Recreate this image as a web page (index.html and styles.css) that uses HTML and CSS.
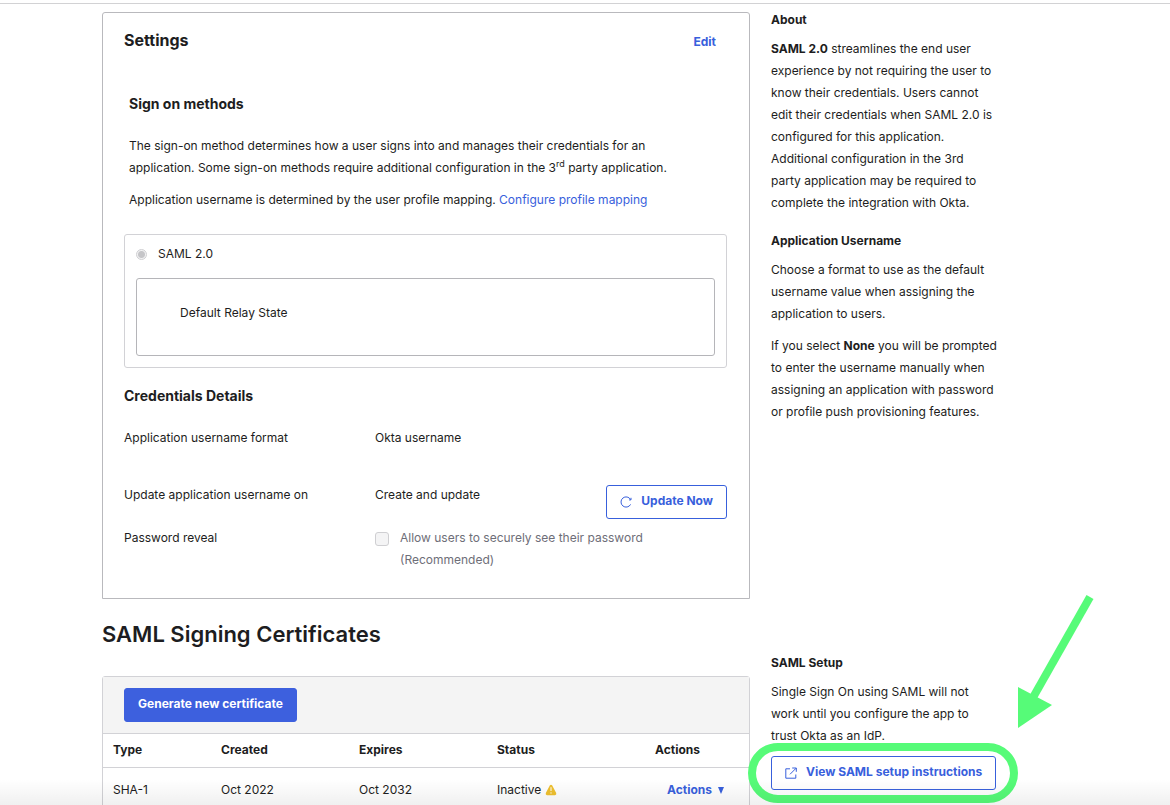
FILE: index.html
```html
<!DOCTYPE html>
<html lang="en">
<head>
<meta charset="utf-8">
<title>Sign on settings</title>
<link rel="stylesheet" href="styles.css">
</head>
<body>
<div class="page">
  <div class="layout">
    <main class="panel">
      <header class="panel-header">
        <h2>Settings</h2>
        <a class="edit" href="#edit">Edit</a>
      </header>
      <section class="methods">
        <h3>Sign on methods</h3>
        <p>The sign-on method determines how a user signs into and manages their credentials for an application. Some sign-on methods require additional configuration in the 3<sup>rd</sup> party application.</p>
        <p>Application username is determined by the user profile mapping. <a href="#mapping">Configure profile mapping</a></p>
      </section>
      <section class="method">
        <label class="method-name"><input class="radio" type="radio" name="method" checked disabled>SAML 2.0</label>
        <div class="relay">Default Relay State</div>
      </section>
      <section class="credentials">
        <h3>Credentials Details</h3>
        <div class="field field-format"><span>Application username format</span><span>Okta username</span></div>
        <div class="field field-update">
          <span>Update application username on</span><span>Create and update</span>
          <button class="button" type="button">
            <svg class="icon" viewBox="0 0 12 12"><path d="M10.6 3.6A5.1 5.1 0 1 0 10.6 8.4M11 1.8V3.9H9"/></svg>
            Update Now
          </button>
        </div>
        <div class="field">
          <span>Password reveal</span>
          <label class="check"><input class="checkbox" type="checkbox" disabled><span>Allow users to securely see their password (Recommended)</span></label>
        </div>
      </section>
    </main>

    <aside class="help">
      <h4>About</h4>
      <p><b>SAML 2.0</b> streamlines the end user experience by not requiring the user to know their credentials. Users cannot edit their credentials when SAML 2.0 is configured for this application. Additional configuration in the 3rd<br>party application may be required to complete the integration with Okta.</p>
      <h4 class="help-next">Application Username</h4>
      <p>Choose a format to use as the default username value when assigning the application to users.</p>
      <p>If you select <b>None</b> you will be prompted to enter the username manually when assigning an application with password or profile push provisioning features.</p>
    </aside>

    <section class="certificates">
      <h1>SAML Signing Certificates</h1>
      <div class="cert-panel">
        <div class="toolbar"><button class="button primary" type="button">Generate new certificate</button></div>
        <table>
          <thead><tr><th class="c-type">Type</th><th class="c-date">Created</th><th class="c-date">Expires</th><th class="c-status">Status</th><th>Actions</th></tr></thead>
          <tbody><tr>
            <td>SHA-1</td><td>Oct 2022</td><td>Oct 2032</td>
            <td>Inactive <svg class="warning" viewBox="0 0 12 12"><path class="warning-shape" d="M4.9 1.3Q6 0 7.1 1.3L11.2 9Q11.8 11 10 11.2H2Q.2 11 .8 9Z"/><path class="warning-mark" d="M6 3.2V7M6 8.3V9.6"/></svg></td>
            <td><button class="menu" type="button">Actions <svg class="caret" viewBox="0 0 6 7"><path d="M0 0H6L3 7Z"/></svg></button></td>
          </tr></tbody>
        </table>
      </div>
    </section>

    <aside class="help setup">
      <h4>SAML Setup</h4>
      <p>Single Sign On using SAML will not work until you configure the app to<br>trust Okta as an IdP.</p>
      <div class="setup-action">
        <a class="button" href="#setup">
          <svg class="icon" viewBox="0 0 12 12"><path d="M5 1.8H.8V11.2H10.8V7.5M7.2 1H11.3V4.8M5 7.3L11.1 1.2"/></svg>
          View SAML setup instructions
        </a>
        <svg class="callout" viewBox="0 0 346 212">
          <rect x="4" y="152" width="262" height="52" rx="26"/>
          <path class="arrow-line" d="M342 2L283 106"/>
          <path class="arrow-head" d="M270 133V92L304 110Z"/>
        </svg>
      </div>
    </aside>
  </div>
  <div class="fade"></div>
</div>
</body>
</html>
```
FILE: styles.css
```css
* { box-sizing: border-box; }
body {
  margin: 0;
  background: #fff;
  color: #1d1d21;
  font: 12px/22px Inter, "Liberation Sans", sans-serif;
}
h1, h2, h3, h4, p { margin: 0; }
a { color: #3860dc; text-decoration: none; }
h1, h3 { font-weight: 600; }
b, h2, h4, th { font-weight: 700; }
h3 { font-weight: 700; }
sup { font-size: 9px; line-height: 0; }

.page {
  position: relative;
  height: 100vh;
  overflow: hidden;
  padding: 3px 168px 0 102px;
}
.page::before {
  content: "";
  position: absolute;
  inset: 3px 0 auto;
  border-top: 1px solid #d2d2d4;
}
.layout {
  display: grid;
  grid-template-columns: minmax(0, 1fr) 231px;
  column-gap: 21px;
  padding-top: 9px;
}

.panel {
  border: 1px solid #b9b9bd;
  border-radius: 3px 3px 0 0;
  padding: 13px 22px 27px 21px;
}
.panel-header {
  display: flex;
  justify-content: space-between;
  align-items: center;
  padding-right: 11px;
}
h2 { font-size: 16px; line-height: 28px; }
.edit { padding-top: 3px; font-weight: 700; }
h3 { font-size: 14px; }
.methods { padding: 39px 5px 23px; }
.methods h3 { margin-bottom: 20px; }
.methods p { max-width: 560px; }
.methods p + p { margin-top: 10px; }

.method {
  border: 1px solid #d2d2d6;
  border-radius: 3px;
  padding: 8px 11px 11px;
}
.method-name { display: flex; align-items: center; gap: 11px; }
.radio, .checkbox {
  appearance: none;
  flex: none;
  margin: 0;
  border: 1px solid #cfcfd2;
  background: #f4f4f5;
}
.radio {
  width: 11px;
  height: 11px;
  border-radius: 50%;
  background: radial-gradient(circle, #c5c5c8 0 3px, #f2f2f3 4px);
}
.checkbox { width: 14px; height: 14px; border-radius: 3px; margin-top: 5px; }
.relay {
  margin-top: 13px;
  border: 1px solid #b5b5b9;
  border-radius: 3px;
  padding: 23px 43px 31px;
}

.credentials { padding-top: 17px; }
.field { display: grid; grid-template-columns: 251px minmax(0, 1fr) auto; }
.field-format { margin: 20px 0 35px; }
.field-update { height: 43px; }
.check { display: flex; gap: 11px; max-width: 300px; color: #6e6e78; }

.button {
  display: inline-flex;
  align-items: center;
  gap: 9px;
  height: 34px;
  padding: 0 13px 2px;
  border: 1px solid #3860dc;
  border-radius: 3px;
  background: #fff;
  color: #3860dc;
  font: 700 12px/22px Inter, "Liberation Sans", sans-serif;
  white-space: nowrap;
}
.field .button { margin-top: 1px; }
.primary { background: #3d60de; border-color: #3d60de; color: #fff; }
.icon {
  width: 12px;
  height: 12px;
  margin-top: 2px;
  fill: none;
  stroke: currentColor;
}

.help h4 { font-size: 12px; margin: -3px 0 7px; }
.help p { max-width: 228px; margin-bottom: 10px; }
.help .help-next { margin-top: 16px; }

.certificates { padding-top: 19px; }
h1 { font-size: 22px; line-height: 32px; margin-bottom: 26px; }
.cert-panel { border: 1px solid #d2d2d6; border-radius: 3px 3px 0 0; }
.toolbar { display: flex; padding: 11px 21px; background: #f4f4f4; }
table { width: 100%; border-collapse: collapse; table-layout: fixed; }
th, td { text-align: left; padding: 0 0 0 10px; }
th { height: 34px; padding-bottom: 2px; border: solid #d2d2d6; border-width: 1px 0; }
td { height: 44px; }
.c-type { width: 108px; }
.c-date { width: 138px; }
.c-status { width: 158px; }
.warning { width: 12px; height: 12px; vertical-align: -2px; }
.warning-shape { fill: #efc02f; }
.warning-mark { fill: none; stroke: #fff; stroke-width: 1; }
.menu {
  border: 0;
  padding: 0 0 0 12px;
  background: none;
  color: #3860dc;
  font: 700 12px/22px Inter, "Liberation Sans", sans-serif;
}
.caret { width: 6px; height: 7px; margin-left: 3px; fill: currentColor; }

.setup { padding-top: 56px; }
.setup p { margin-bottom: 9px; }
.setup-action { position: relative; display: flex; }
.callout {
  position: absolute;
  right: -92px;
  bottom: -17px;
  width: 346px;
  height: 212px;
  pointer-events: none;
}
.callout rect, .arrow-line { fill: none; stroke: #56fb78; stroke-width: 8; }
.arrow-head { fill: #56fb78; }

.fade {
  position: absolute;
  inset: auto 0 0;
  height: 26px;
  background: linear-gradient(transparent, rgba(0, 0, 0, 0.06));
  pointer-events: none;
}
```
